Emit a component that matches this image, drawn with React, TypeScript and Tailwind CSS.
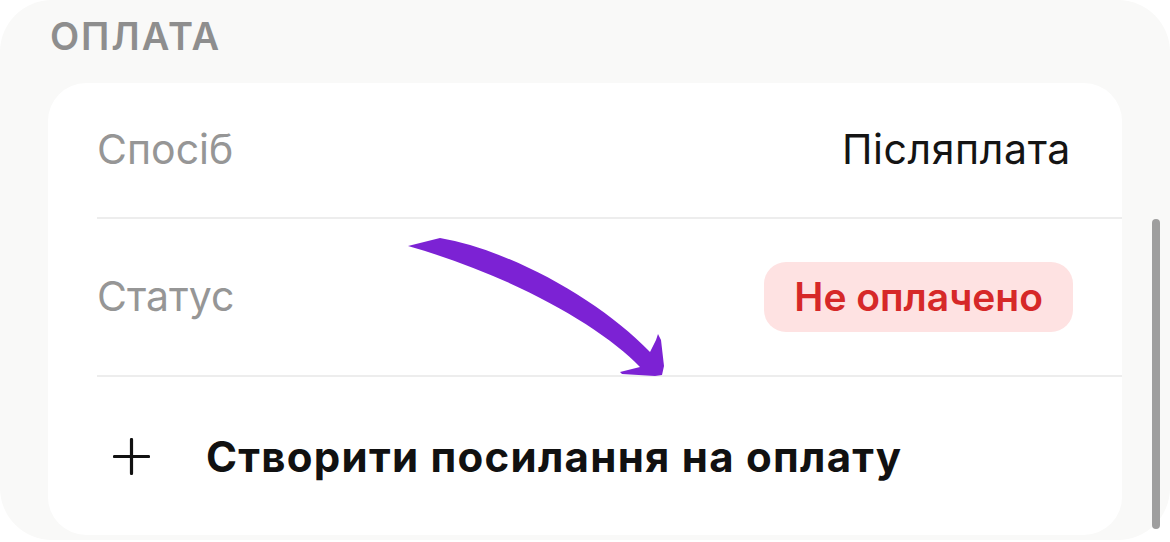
export default function App() {
  return (
    <div className="w-[1170px] h-[542px] bg-white overflow-hidden font-['Inter',sans-serif]">
      <div className="relative h-[540px] w-[1170px] rounded-[52px] bg-[#f9f9f8] pl-[48px] pr-[48px] pt-[17px]">
        <h2 className="ml-[2px] text-[38px] leading-[38px] font-semibold tracking-[0.05em] text-[#8e8e8e]">
          ОПЛАТА
        </h2>

        <div className="mt-[28px] h-[452px] rounded-[38px] bg-white pl-[49px]">
          {/* Payment method */}
          <div className="flex h-[136px] items-center justify-between border-b-2 border-[#ededed] pr-[51px]">
            <span className="text-[41px] text-[#969696]">Спосіб</span>
            <span className="text-[41px] tracking-[0.015em] text-[#141414]">Післяплата</span>
          </div>

          {/* Status */}
          <div className="flex h-[158px] items-center justify-between border-b-2 border-[#ededed] pr-[49px]">
            <span className="text-[41px] text-[#969696]">Статус</span>
            <span className="flex h-[70px] items-center rounded-[22px] bg-[#fee2e2] px-[30px] text-[39px] font-semibold text-[#d62828]">
              Не оплачено
            </span>
          </div>

          {/* Create link */}
          <div className="flex h-[158px] items-center">
            <svg width="37" height="37" viewBox="0 0 37 37" className="ml-[16px]">
              <path d="M18.5 1.5v34M1.5 18.5h34" stroke="#111" strokeWidth="3.2" strokeLinecap="round" />
            </svg>
            <span className="ml-[56px] text-[42px] font-bold tracking-[0.03em] text-[#111]">
              Створити посилання на оплату
            </span>
          </div>
        </div>

        {/* scrollbar */}
        <div className="absolute left-[1152px] top-[219px] h-[310px] w-[8px] rounded-full bg-[#9e9e9e]" />

        {/* arrow annotation */}
        <svg
          className="pointer-events-none absolute left-0 top-0"
          width="1170"
          height="542"
          viewBox="0 0 1170 542"
        >
          <path
            d="M408 246 L440 238 C510 250 600 300 650 352 L656 340 L658 334 L661 340 L664 366 L662 375 L655 376 L622 374 L620 372 L640 367 C600 325 510 275 408 246 Z"
            fill="#7c22d4"
          />
        </svg>
      </div>
    </div>
  );
}
